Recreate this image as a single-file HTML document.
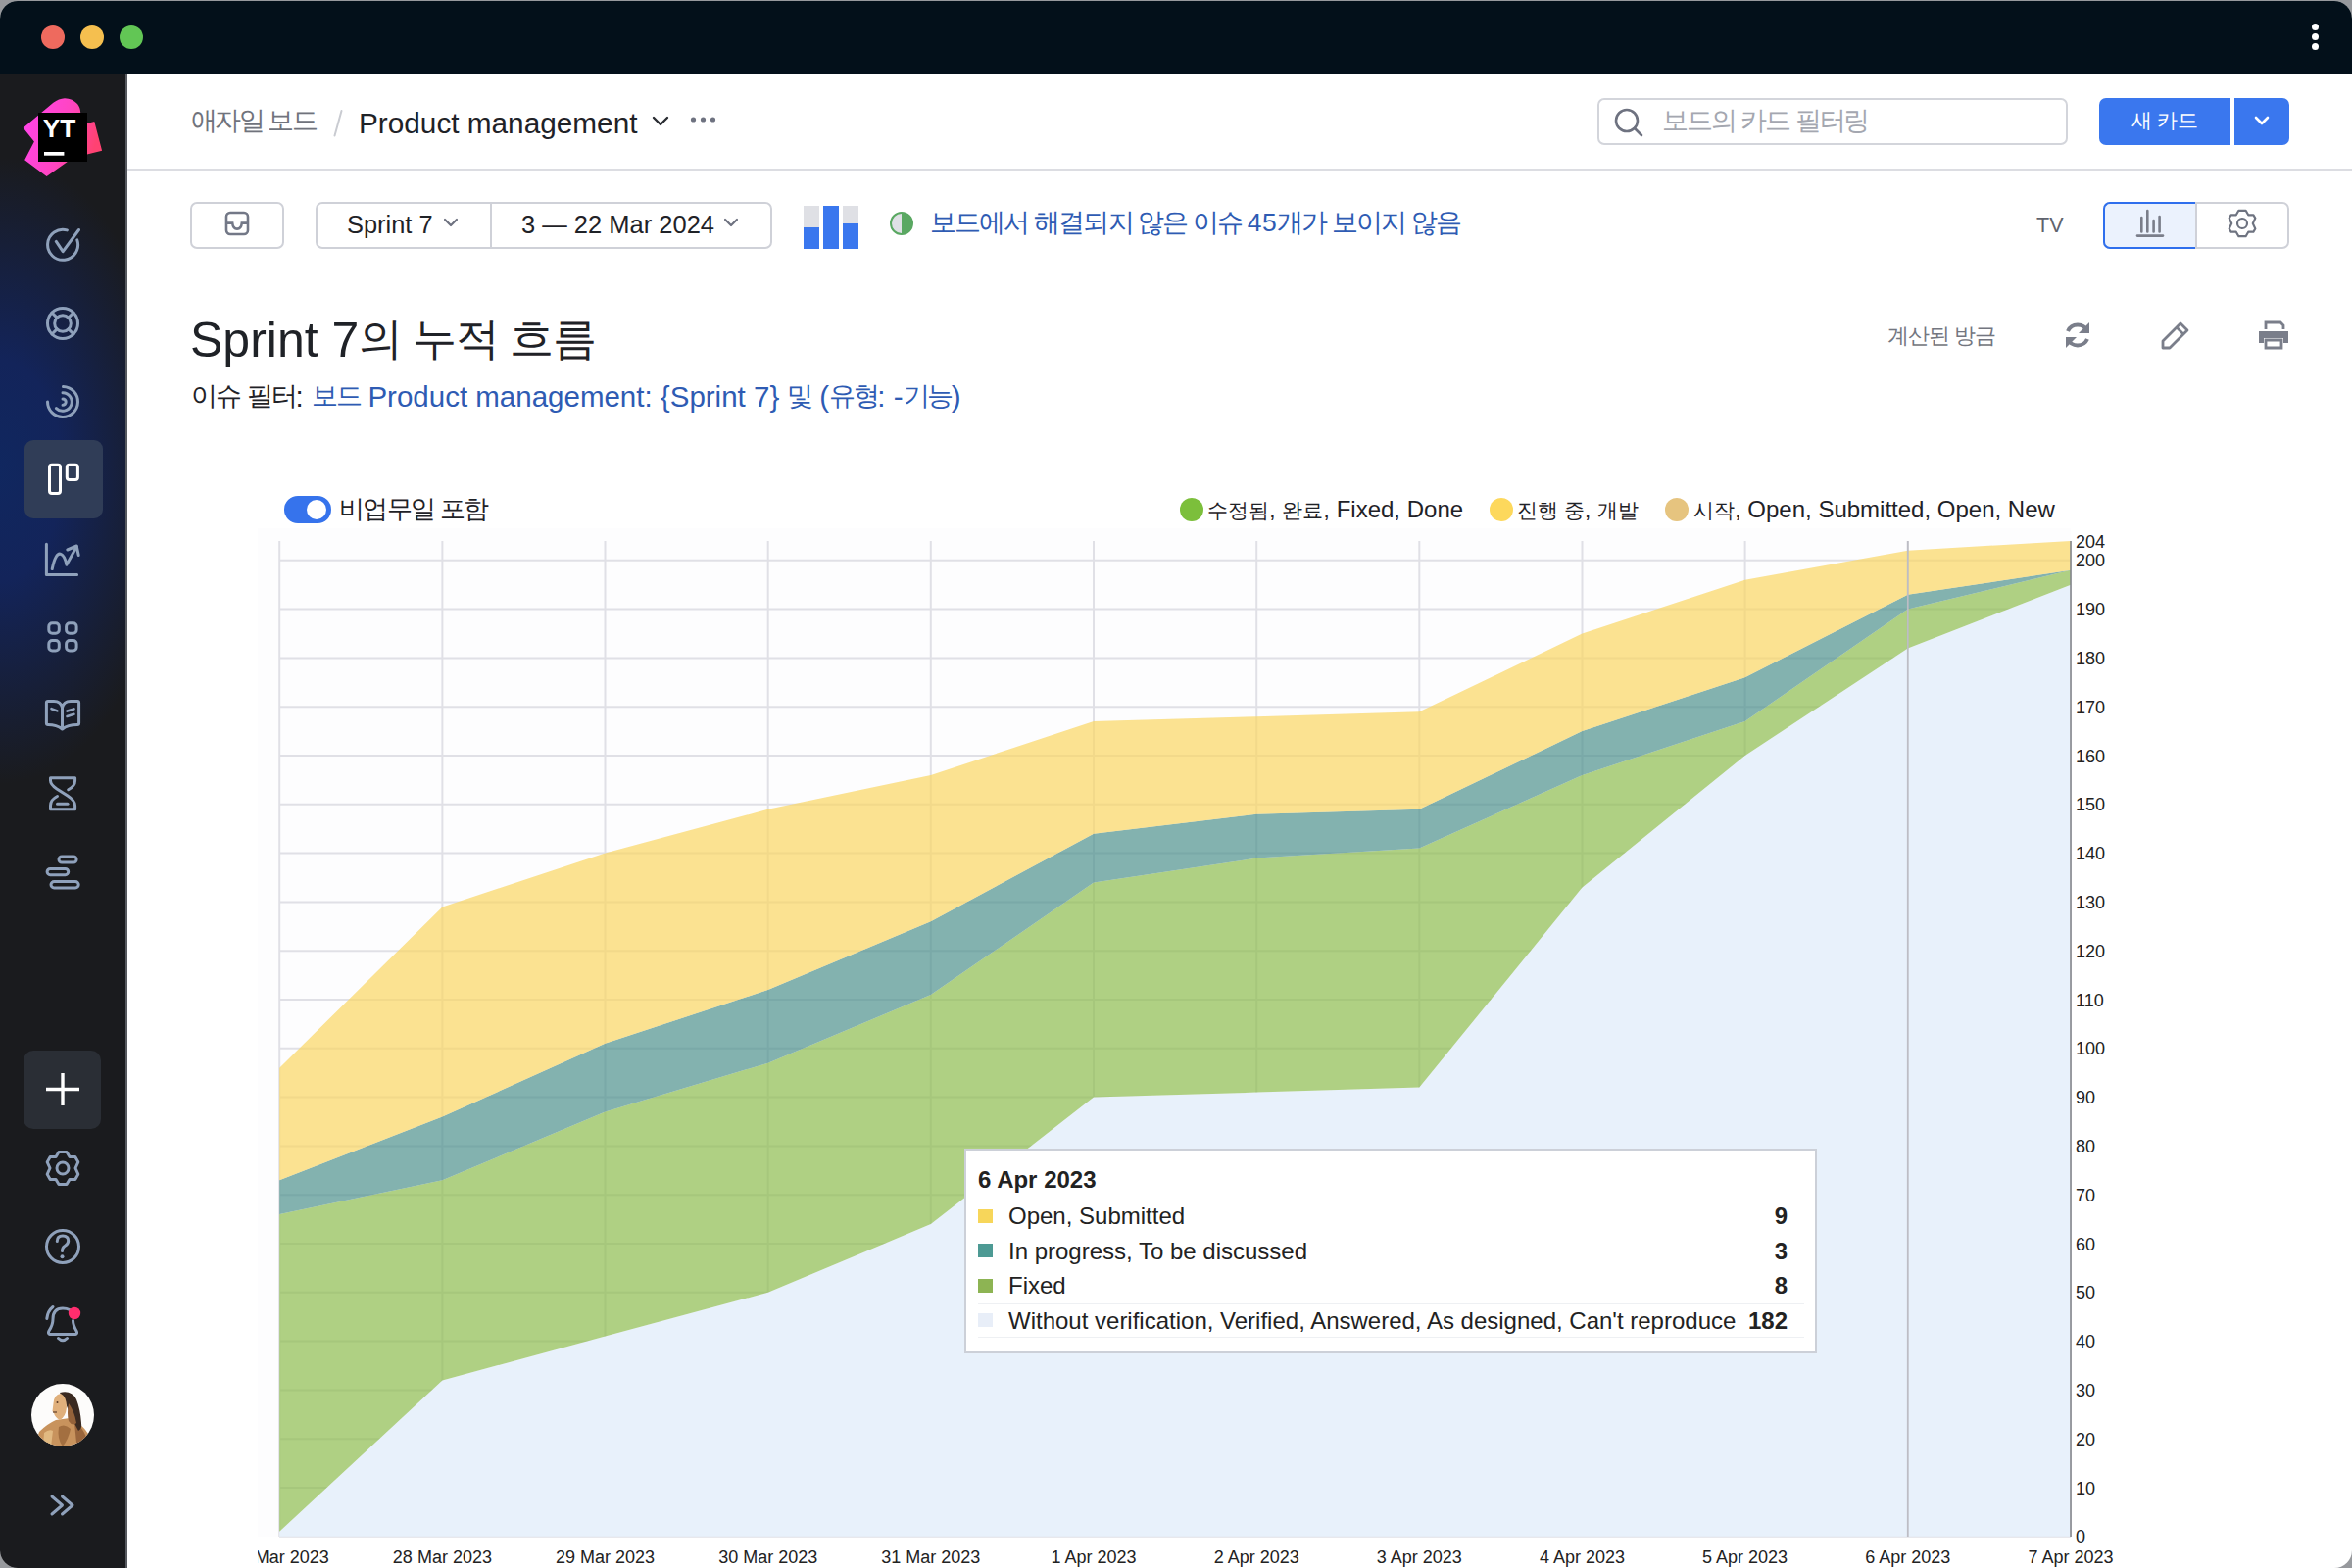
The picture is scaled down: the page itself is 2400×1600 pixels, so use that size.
<!DOCTYPE html>
<html><head><meta charset="utf-8">
<style>
*{box-sizing:border-box;margin:0;padding:0}
html,body{width:2400px;height:1600px;overflow:hidden;background:#97999d;font-family:"Liberation Sans",sans-serif}
.win{position:absolute;left:0;top:1px;width:2400px;height:1599px;border-radius:18px;overflow:hidden;background:#fff}
.titlebar{position:absolute;left:0;top:0;width:2400px;height:76px;background:#03101a}
.tl{position:absolute;top:26px;width:24px;height:24px;border-radius:50%}
.dots3 i{position:absolute;left:2359px;width:7px;height:7px;border-radius:50%;background:#fff}
.side{position:absolute;left:0;top:76px;width:128px;height:1524px;background:#1a1b1e;overflow:hidden}
.side .glow{position:absolute;left:-180px;top:84px;width:360px;height:640px;border-radius:50%;background:radial-gradient(closest-side,#10275f 0%,#13245a 35%,rgba(26,27,30,0) 100%)}
.sideborder{position:absolute;left:128px;top:76px;width:2px;height:1524px;background:#56595f}
.abs{position:absolute}
.ico{position:absolute;left:44px;width:40px;height:40px}
.t{position:absolute;white-space:nowrap;line-height:1}
.k{font-size:0.875em}
.sub .k{font-size:0.9em;letter-spacing:-2.4px;position:relative;top:-1.5px}
</style></head><body>
<div class="win">
<div class="pg" style="position:absolute;left:0;top:-1px;width:2400px;height:1600px"><div class="titlebar">
  <div class="tl" style="left:42px;background:#ee6a5e"></div>
  <div class="tl" style="left:82px;background:#f5bf4f"></div>
  <div class="tl" style="left:122px;background:#62c655"></div>
  <div class="dots3"><i style="top:24px"></i><i style="top:34px"></i><i style="top:44px"></i></div>
</div>
<div class="side"><div class="glow"></div></div>
<div class="sideborder"></div>
<div class="abs" style="left:25px;top:449px;width:80px;height:80px;border-radius:9px;background:#303d57"></div>
<div class="abs" style="left:24px;top:1072px;width:79px;height:80px;border-radius:10px;background:#2a2e35"></div>
<svg class="abs" style="left:0;top:0" width="128" height="1600" viewBox="0 0 128 1600">
<g fill="none" stroke="#fff" stroke-width="3" stroke-linejoin="round">
<rect x="50.5" y="474.3" width="11" height="29.1" rx="2.5"/>
<rect x="68.3" y="474.3" width="11.1" height="15.2" rx="2.5"/>
</g>
<defs><clipPath id="av"><circle cx="64" cy="1444" r="32"/></clipPath></defs>
<circle cx="64" cy="1444" r="32" fill="#fdfcfb"/>
<g clip-path="url(#av)">
<path d="M40 1461 Q48 1453 57 1449 L71 1447 Q82 1451 90 1463 L94 1480 H34 Z" fill="#c8935d"/>
<path d="M60 1456 Q66 1452 72 1458 Q70 1468 64 1476 Q58 1468 60 1456 Z" fill="#9a663a" opacity="0.8"/>
<path d="M45 1462 Q50 1458 54 1460 L52 1476 H44 Z" fill="#e3be85" opacity="0.9"/>
<path d="M76 1452 Q84 1456 88 1466 L86 1476 L78 1472 Z" fill="#8d5a34" opacity="0.8"/>
<path d="M61 1421 Q73 1418 78 1428 Q82 1438 83 1452 Q84 1458 80 1460 Q76 1452 72 1446 Q69 1436 66 1430 Z" fill="#3a2a21"/>
<path d="M70 1432 Q76 1440 78 1452 Q74 1456 70 1450 Q68 1442 70 1432 Z" fill="#94623a"/>
<path d="M54.5 1432 Q55 1423 62 1422 Q68 1425 68 1436 Q67 1446 61 1449 Q56 1446 55 1442 L53.5 1440 Z" fill="#e0b07c"/>
<circle cx="58.5" cy="1431" r="1" fill="#5a3a25"/>
<path d="M54 1441 H58" stroke="#4a2a1a" stroke-width="1.2"/>
</g>
</svg>
<svg class="abs" style="left:0;top:0" width="128" height="1600" viewBox="0 0 128 1600">
<defs><linearGradient id="pk" x1="0" y1="0" x2="1" y2="0.3"><stop offset="0" stop-color="#ff44f0"/><stop offset="0.6" stop-color="#ff45c0"/><stop offset="1" stop-color="#ff4272"/></linearGradient></defs>
<path d="M23.7 130.6 L54.4 104.8 Q60 100.5 66 100.2 Q74 100.5 79 106 Q82 109.5 82.2 115 L88.9 115 L88.9 126 L96.3 124 L104.1 153.8 L88.9 157.6 L88.9 164.7 L68.8 165 L47.6 180 L25.2 163.3 L34.9 144.4 Z" fill="url(#pk)"/>
<rect x="39" y="115" width="50" height="50" fill="#000"/>
<text x="43.8" y="140.2" font-family="Liberation Sans, sans-serif" font-size="26" font-weight="bold" fill="#fff" textLength="33.5" lengthAdjust="spacingAndGlyphs">YT</text>
<rect x="45" y="155" width="20.4" height="3.7" fill="#fff"/>
<g fill="none" stroke="#8fa1bb" stroke-width="3" stroke-linecap="round" stroke-linejoin="round">
<!-- check -->
<path d="M68.4 234.9 A15.5 15.5 0 1 0 78.8 244.9"/>
<path d="M57.3 246.4 L64.2 256.7 L80.5 234.5"/>
<!-- lifebuoy -->
<circle cx="64" cy="330" r="15.5"/>
<circle cx="64" cy="330" r="8.3"/>
<path d="M53 319 L58.1 324.1 M75 319 L69.9 324.1 M53 341 L58.1 335.9 M75 341 L69.9 335.9"/>
<!-- spiral -->
<path d="M64.5 394.5 A15.5 15.5 0 1 1 48.5 410"/>
<path d="M64 400.7 A9.3 9.3 0 1 1 57.4 416.6"/>
<path d="M64 406.9 A3.2 3.2 0 0 1 64 413.3"/>
<!-- chart -->
<path d="M47.4 555.2 V586.4 H78.6"/>
<path d="M53.2 580.6 Q57 563 62.1 565.4 Q66 567 67.9 576.2 L78.4 557.6"/>
<path d="M68.8 561 L78.2 557 L80.2 566.5"/>
<!-- grid -->
<rect x="49.8" y="635.7" width="10.5" height="10.5" rx="3.5"/>
<rect x="67.6" y="635.7" width="10.5" height="10.5" rx="3.5"/>
<rect x="49.8" y="653.5" width="10.5" height="10.5" rx="3.5"/>
<rect x="67.6" y="653.5" width="10.5" height="10.5" rx="3.5"/>
<!-- book -->
<path d="M63.5 744 Q58 739.5 49 739.5 Q47.4 739.5 47.4 738 V717 Q47.4 715.5 49 715.5 H55 Q62 715.5 63.5 722 Q65 715.5 72 715.5 H79 Q80.6 715.5 80.6 717 V738 Q80.6 739.5 79 739.5 Q69 739.5 63.5 744 V722"/>
<path d="M52.5 723.2 L58.5 725.4 M68.5 725.6 L75.5 723.4 M68.5 731 L75.5 728.8" stroke-width="2.6"/>
<!-- hourglass -->
<path d="M58.5 812.5 Q51.5 816 51.5 822 V825.8 H76.6 V822 Q76.6 817 69 812 L58 805 Q51.5 800.5 51.5 796.5 V793.8 H76.6 V796.5 Q76.6 802 69.7 805.8"/>
<path d="M58.5 820.3 H69" />
<!-- bars -->
<rect x="60" y="873.9" width="18.1" height="6.1" rx="3.05"/>
<rect x="48.1" y="886.5" width="21.6" height="6.2" rx="3.1"/>
<rect x="52" y="899.5" width="28.2" height="6.5" rx="3.25"/>
<!-- gear -->
<path d="M64 1175.5 L68 1175.5 L71 1180.6 L76.8 1180.6 L79.8 1185.8 L77 1192 L79.8 1198.2 L76.8 1203.4 L71 1203.4 L68 1208.5 L60 1208.5 L57 1203.4 L51.2 1203.4 L48.2 1198.2 L51 1192 L48.2 1185.8 L51.2 1180.6 L57 1180.6 L60 1175.5 Z"/>
<circle cx="64" cy="1192" r="6"/>
<!-- help -->
<circle cx="64" cy="1272" r="16.5"/>
<path d="M58.3 1266.5 Q58.3 1261 64 1261 Q69.7 1261 69.7 1266 Q69.7 1269.5 66 1271.5 Q63.5 1273 63.5 1276.5"/>
<!-- bell -->
<path d="M71 1336.5 Q68 1335 64 1335 Q54 1335 54 1346 Q54 1352 50 1358 Q48.5 1361 51 1361.5 H77 Q79.5 1361 78 1358 Q74.5 1352 74.5 1347.5"/>
<path d="M59.5 1365.5 Q64 1370 68.5 1365.5"/>
<path d="M54 1333.5 Q48.5 1338 47.8 1345.5"/>
</g>
<circle cx="63.5" cy="1282.2" r="2" fill="#8fa1bb"/>
<circle cx="76" cy="1340" r="6.2" fill="#ff2d6e"/>
<!-- plus -->
<path d="M64 1095 V1128 M47 1111.5 H81" stroke="#fff" stroke-width="3.4" stroke-linecap="butt"/>
<!-- chevrons -->
<path d="M53 1527 L63.5 1536 L53 1545 M63.5 1527 L74 1536 L63.5 1545" fill="none" stroke="#8fa1bb" stroke-width="3" stroke-linecap="round" stroke-linejoin="round"/>
</svg>


<!-- header -->
<div class="t" style="left:195px;top:109.7px;font-size:27px;letter-spacing:-2.6px;color:#70737c">애자일 보드</div>
<svg class="abs" style="left:338px;top:111px" width="14" height="30" viewBox="0 0 14 30"><path d="M10.5 2 L3.5 27.5" stroke="#c9cbd1" stroke-width="2" stroke-linecap="round"/></svg>
<div class="t" style="left:366px;top:111.2px;font-size:29.75px;color:#1f2227">Product management</div>
<svg class="abs" style="left:664px;top:116px" width="20" height="16" viewBox="0 0 20 16"><path d="M3 4 L10 11 L17 4" fill="none" stroke="#2a2d33" stroke-width="2.4" stroke-linecap="round" stroke-linejoin="round"/></svg>
<svg class="abs" style="left:704px;top:118px" width="28" height="8" viewBox="0 0 28 8"><circle cx="3.5" cy="4" r="2.6" fill="#6e7280"/><circle cx="13.5" cy="4" r="2.6" fill="#6e7280"/><circle cx="23.5" cy="4" r="2.6" fill="#6e7280"/></svg>

<div class="abs" style="left:1630px;top:100px;width:480px;height:48px;border:2px solid #d3d5db;border-radius:7px"></div>
<svg class="abs" style="left:1645px;top:108px" width="34" height="34" viewBox="0 0 34 34"><circle cx="15" cy="15" r="11" fill="none" stroke="#6e7280" stroke-width="2.6"/><path d="M23 23 L30 30" stroke="#6e7280" stroke-width="2.6" stroke-linecap="round"/></svg>
<div class="t" style="left:1696px;top:110px;font-size:27px;letter-spacing:-2.06px;color:#a4a7b0">보드의 카드 필터링</div>

<div class="abs" style="left:2142px;top:100px;width:134px;height:48px;background:#3a77ee;border-radius:7px 0 0 7px"></div>
<div class="t" style="left:2142px;top:112px;width:134px;text-align:center;font-size:21px;color:#fff">새 카드</div>
<div class="abs" style="left:2280px;top:100px;width:56px;height:48px;background:#3a77ee;border-radius:0 7px 7px 0"></div>
<svg class="abs" style="left:2298px;top:115px" width="20" height="16" viewBox="0 0 20 16"><path d="M4 5 L10 11 L16 5" fill="none" stroke="#fff" stroke-width="2.6" stroke-linecap="round" stroke-linejoin="round"/></svg>

<div class="abs" style="left:130px;top:172px;width:2270px;height:2px;background:#dcdde2"></div>

<!-- toolbar -->
<div class="abs" style="left:194px;top:206px;width:96px;height:48px;border:2px solid #cfd1d8;border-radius:7px"></div>
<svg class="abs" style="left:229px;top:215px" width="26" height="26" viewBox="0 0 26 26"><rect x="2" y="2" width="22" height="22" rx="4" fill="none" stroke="#737887" stroke-width="2.6"/><path d="M2 12.6 H8.2 Q8.8 18.6 13 18.6 Q17.2 18.6 17.8 12.6 H24" fill="none" stroke="#737887" stroke-width="2.6"/></svg>

<div class="abs" style="left:322px;top:206px;width:466px;height:48px;border:2px solid #cfd1d8;border-radius:7px"></div>
<div class="abs" style="left:500px;top:206px;width:2px;height:48px;background:#cfd1d8"></div>
<div class="t" style="left:354px;top:216.5px;font-size:25.4px;color:#1f2227">Sprint 7</div>
<svg class="abs" style="left:451px;top:220px" width="18" height="14" viewBox="0 0 18 14"><path d="M3 4 L9 10 L15 4" fill="none" stroke="#6e7280" stroke-width="2.2" stroke-linecap="round" stroke-linejoin="round"/></svg>
<div class="t" style="left:532px;top:216.5px;font-size:25.5px;color:#1f2227">3 — 22 Mar 2024</div>
<svg class="abs" style="left:737px;top:220px" width="18" height="14" viewBox="0 0 18 14"><path d="M3 4 L9 10 L15 4" fill="none" stroke="#6e7280" stroke-width="2.2" stroke-linecap="round" stroke-linejoin="round"/></svg>

<svg class="abs" style="left:820px;top:210px" width="56" height="44" viewBox="0 0 56 44">
<rect x="0" y="0" width="16" height="44" fill="#dfe0e5"/><rect x="0" y="22" width="16" height="22" fill="#3a77ee"/>
<rect x="20" y="0" width="16" height="44" fill="#3a77ee"/>
<rect x="40" y="0" width="16" height="44" fill="#dfe0e5"/><rect x="40" y="18" width="16" height="26" fill="#3a77ee"/>
</svg>
<svg class="abs" style="left:907px;top:215px" width="26" height="26" viewBox="0 0 26 26"><circle cx="13" cy="13" r="11" fill="#dfe0e5" stroke="#5aa862" stroke-width="2"/><path d="M13 2 A11 11 0 0 1 13 24 Z" fill="#5aa862"/></svg>
<div class="t" style="left:949px;top:213.5px;font-size:26.5px;letter-spacing:-1.85px;color:#2e5bb3">보드에서 해결되지 않은 이슈 <span style="letter-spacing:0.5px">45</span>개가 보이지 않음</div>

<div class="t" style="left:2078px;top:220px;font-size:21.5px;color:#5f636d">TV</div>
<div class="abs" style="left:2146px;top:206px;width:190px;height:48px;border:2px solid #cfd1d8;border-radius:7px"></div>
<div class="abs" style="left:2146px;top:206px;width:95px;height:48px;border:2px solid #2f6fed;border-right:none;border-radius:7px 0 0 7px;background:#ebf2fd"></div><div class="abs" style="left:2240px;top:206px;width:2px;height:48px;background:#cfd1d8"></div>
<svg class="abs" style="left:2176px;top:210px" width="36" height="36" viewBox="0 0 36 36"><path d="M9.3 26.5 V12 M15.3 26.5 V5 M21.6 26.5 V15 M27.6 26.5 V11" fill="none" stroke="#7a7e8a" stroke-width="2.6" stroke-linecap="round"/><path d="M5 30.6 H31" stroke="#7a7e8a" stroke-width="2.6" stroke-linecap="round"/></svg>
<svg class="abs" style="left:2272px;top:212px" width="32" height="32" viewBox="0 0 32 32"><path d="M16 2.8 L19.6 2.8 L22.2 7.3 L27.4 7.3 L29.3 10.6 L26.8 16 L29.3 21.4 L27.4 24.7 L22.2 24.7 L19.6 29.2 L12.4 29.2 L9.8 24.7 L4.6 24.7 L2.7 21.4 L5.2 16 L2.7 10.6 L4.6 7.3 L9.8 7.3 L12.4 2.8 Z" fill="none" stroke="#6e7380" stroke-width="2.2" stroke-linejoin="round"/><circle cx="16" cy="16" r="5" fill="none" stroke="#6e7380" stroke-width="2.2"/></svg>

<!-- title -->
<div class="t" style="left:194px;top:321.5px;font-size:50px;color:#1f2227">Sprint 7<span style="font-size:45px;letter-spacing:-1.2px;position:relative;top:-3px">의 누적 흐름</span></div>
<div class="t sub" style="left:195px;top:389.5px;font-size:29.5px;color:#1f2227"><span class="k">이슈</span> <span class="k">필터</span>: <span style="color:#2e5bb3"><span class="k">보드</span> Product management: {Sprint 7} <span class="k">및</span> (<span class="k">유형</span>: -<span class="k">기능</span>)</span></div>

<div class="t" style="left:1926px;top:332.3px;font-size:22px;letter-spacing:-1.12px;color:#737680">계산된 방금</div>
<svg class="abs" style="left:2104px;top:326px" width="32" height="32" viewBox="0 0 32 32"><path d="M26 12 A11 11 0 0 0 6 12" fill="none" stroke="#7a7e8a" stroke-width="4"/><path d="M28 3 V14 H17 Z" fill="#7a7e8a"/><path d="M6 20 A11 11 0 0 0 26 20" fill="none" stroke="#7a7e8a" stroke-width="4"/><path d="M4 29 V18 H15 Z" fill="#7a7e8a"/></svg>
<svg class="abs" style="left:2204px;top:326px" width="32" height="32" viewBox="0 0 32 32"><path d="M21 4 L28 11 L10 29 H3 V22 Z M17 8 L24 15" fill="none" stroke="#7a7e8a" stroke-width="2.8" stroke-linejoin="round"/></svg>
<svg class="abs" style="left:2303px;top:326px" width="34" height="32" viewBox="0 0 34 32"><path d="M9 10 V3 H24 L27 6 V10" fill="none" stroke="#7a7e8a" stroke-width="2.8"/><path d="M2 12 H32 V24 H27 V19 H7 V24 H2 Z" fill="#7a7e8a"/><path d="M9 21 H25 V29 H9 Z" fill="none" stroke="#7a7e8a" stroke-width="2.8"/></svg>

<!-- legend -->
<div class="abs" style="left:290px;top:506px;width:48px;height:28px;border-radius:14px;background:#3673ec"></div>
<div class="abs" style="left:313px;top:510px;width:20px;height:20px;border-radius:50%;background:#fff"></div>
<div class="t" style="left:346px;top:507px;font-size:25.5px;letter-spacing:-1.6px;color:#1f2227">비업무일 포함</div>

<div class="abs" style="left:1204px;top:508px;width:24px;height:24px;border-radius:50%;background:#7cbf3b"></div>
<div class="t" style="left:1232px;top:507.6px;font-size:24px;color:#1f2227"><span class="k">수정됨</span>, <span class="k">완료</span>, Fixed, Done</div>
<div class="abs" style="left:1520px;top:508px;width:24px;height:24px;border-radius:50%;background:#fdd85c"></div>
<div class="t" style="left:1548px;top:507.6px;font-size:24px;color:#1f2227"><span class="k">진행 중</span>, <span class="k">개발</span></div>
<div class="abs" style="left:1699px;top:508px;width:24px;height:24px;border-radius:50%;background:#e6c47f"></div>
<div class="t" style="left:1728px;top:507.6px;font-size:24px;color:#1f2227"><span class="k">시작</span>, Open, Submitted, Open, New</div>
<svg class="abs" style="left:0;top:0" width="2400" height="1600" viewBox="0 0 2400 1600">
<defs><clipPath id="lc"><rect x="263" y="1570" width="2000" height="30"/></clipPath></defs>
<rect x="263" y="539" width="1850" height="1029" fill="#fdfdfe"/>
<g stroke="#e0e0e6" stroke-width="2">
<line x1="285" y1="1567.8" x2="2113" y2="1567.8"/>
<line x1="285" y1="1518.0" x2="2113" y2="1518.0"/>
<line x1="285" y1="1468.2" x2="2113" y2="1468.2"/>
<line x1="285" y1="1418.4" x2="2113" y2="1418.4"/>
<line x1="285" y1="1368.6" x2="2113" y2="1368.6"/>
<line x1="285" y1="1318.8" x2="2113" y2="1318.8"/>
<line x1="285" y1="1269.0" x2="2113" y2="1269.0"/>
<line x1="285" y1="1219.2" x2="2113" y2="1219.2"/>
<line x1="285" y1="1169.4" x2="2113" y2="1169.4"/>
<line x1="285" y1="1119.6" x2="2113" y2="1119.6"/>
<line x1="285" y1="1069.8" x2="2113" y2="1069.8"/>
<line x1="285" y1="1020.0" x2="2113" y2="1020.0"/>
<line x1="285" y1="970.2" x2="2113" y2="970.2"/>
<line x1="285" y1="920.4" x2="2113" y2="920.4"/>
<line x1="285" y1="870.6" x2="2113" y2="870.6"/>
<line x1="285" y1="820.8" x2="2113" y2="820.8"/>
<line x1="285" y1="771.0" x2="2113" y2="771.0"/>
<line x1="285" y1="721.2" x2="2113" y2="721.2"/>
<line x1="285" y1="671.4" x2="2113" y2="671.4"/>
<line x1="285" y1="621.6" x2="2113" y2="621.6"/>
<line x1="285" y1="571.8" x2="2113" y2="571.8"/>
<line x1="285.2" y1="552" x2="285.2" y2="1568"/>
<line x1="451.4" y1="552" x2="451.4" y2="1568"/>
<line x1="617.5" y1="552" x2="617.5" y2="1568"/>
<line x1="783.7" y1="552" x2="783.7" y2="1568"/>
<line x1="949.8" y1="552" x2="949.8" y2="1568"/>
<line x1="1116.0" y1="552" x2="1116.0" y2="1568"/>
<line x1="1282.2" y1="552" x2="1282.2" y2="1568"/>
<line x1="1448.3" y1="552" x2="1448.3" y2="1568"/>
<line x1="1614.5" y1="552" x2="1614.5" y2="1568"/>
<line x1="1780.6" y1="552" x2="1780.6" y2="1568"/>
<line x1="1946.8" y1="552" x2="1946.8" y2="1568"/>
<line x1="2113.0" y1="552" x2="2113.0" y2="1568"/>
</g>
<polygon points="285.2,1562.8 451.4,1408.4 617.5,1363.6 783.7,1318.8 949.8,1249.1 1116.0,1119.6 1282.2,1114.6 1448.3,1109.6 1614.5,905.5 1780.6,771.0 1946.8,661.4 2113.0,596.7 2113.0,1567.8 1946.8,1567.8 1780.6,1567.8 1614.5,1567.8 1448.3,1567.8 1282.2,1567.8 1116.0,1567.8 949.8,1567.8 783.7,1567.8 617.5,1567.8 451.4,1567.8 285.2,1567.8" fill="#e8f1fb"/>
<polygon points="285.2,1239.1 451.4,1204.3 617.5,1134.5 783.7,1084.7 949.8,1015.0 1116.0,900.5 1282.2,875.6 1448.3,865.6 1614.5,790.9 1780.6,736.1 1946.8,621.6 2113.0,581.8 2113.0,596.7 1946.8,661.4 1780.6,771.0 1614.5,905.5 1448.3,1109.6 1282.2,1114.6 1116.0,1119.6 949.8,1249.1 783.7,1318.8 617.5,1363.6 451.4,1408.4 285.2,1562.8" fill="#8dbc4f" fill-opacity="0.7"/>
<polygon points="285.2,1204.3 451.4,1139.5 617.5,1064.8 783.7,1010.0 949.8,940.3 1116.0,850.7 1282.2,830.8 1448.3,825.8 1614.5,746.1 1780.6,691.3 1946.8,606.7 2113.0,581.8 2113.0,581.8 1946.8,621.6 1780.6,736.1 1614.5,790.9 1448.3,865.6 1282.2,875.6 1116.0,900.5 949.8,1015.0 783.7,1084.7 617.5,1134.5 451.4,1204.3 285.2,1239.1" fill="#4e928d" fill-opacity="0.7"/>
<polygon points="285.2,1089.7 451.4,925.4 617.5,870.6 783.7,825.8 949.8,790.9 1116.0,736.1 1282.2,731.2 1448.3,726.2 1614.5,646.5 1780.6,591.7 1946.8,561.8 2113.0,551.9 2113.0,581.8 1946.8,606.7 1780.6,691.3 1614.5,746.1 1448.3,825.8 1282.2,830.8 1116.0,850.7 949.8,940.3 783.7,1010.0 617.5,1064.8 451.4,1139.5 285.2,1204.3" fill="#fad562" fill-opacity="0.7"/>
<line x1="1946.8" y1="552" x2="1946.8" y2="1568" stroke="#bdbdc5" stroke-width="1.8"/>
<line x1="2113" y1="552" x2="2113" y2="1568" stroke="#85878d" stroke-width="1.6"/>
<g font-family="Liberation Sans, sans-serif" font-size="18" fill="#222">
<g clip-path="url(#lc)"><text x="285.2" y="1595" text-anchor="middle">27 Mar 2023</text>
<text x="451.4" y="1595" text-anchor="middle">28 Mar 2023</text>
<text x="617.5" y="1595" text-anchor="middle">29 Mar 2023</text>
<text x="783.7" y="1595" text-anchor="middle">30 Mar 2023</text>
<text x="949.8" y="1595" text-anchor="middle">31 Mar 2023</text>
<text x="1116.0" y="1595" text-anchor="middle">1 Apr 2023</text>
<text x="1282.2" y="1595" text-anchor="middle">2 Apr 2023</text>
<text x="1448.3" y="1595" text-anchor="middle">3 Apr 2023</text>
<text x="1614.5" y="1595" text-anchor="middle">4 Apr 2023</text>
<text x="1780.6" y="1595" text-anchor="middle">5 Apr 2023</text>
<text x="1946.8" y="1595" text-anchor="middle">6 Apr 2023</text>
<text x="2113.0" y="1595" text-anchor="middle">7 Apr 2023</text>
</g>
<text x="2118" y="1574.3">0</text>
<text x="2118" y="1524.5">10</text>
<text x="2118" y="1474.7">20</text>
<text x="2118" y="1424.9">30</text>
<text x="2118" y="1375.1">40</text>
<text x="2118" y="1325.3">50</text>
<text x="2118" y="1275.5">60</text>
<text x="2118" y="1225.7">70</text>
<text x="2118" y="1175.9">80</text>
<text x="2118" y="1126.1">90</text>
<text x="2118" y="1076.3">100</text>
<text x="2118" y="1026.5">110</text>
<text x="2118" y="976.7">120</text>
<text x="2118" y="926.9">130</text>
<text x="2118" y="877.1">140</text>
<text x="2118" y="827.3">150</text>
<text x="2118" y="777.5">160</text>
<text x="2118" y="727.7">170</text>
<text x="2118" y="677.9">180</text>
<text x="2118" y="628.1">190</text>
<text x="2118" y="578.3">200</text>
<text x="2118" y="558.5">204</text>
</g>
</svg><div class="abs" style="left:984px;top:1172px;width:870px;height:209px;background:#fff;border:2px solid #ccd0d8"></div>
<div class="t" style="left:998px;top:1192px;font-size:24px;font-weight:bold;color:#222">6 Apr 2023</div>
<div class="abs" style="left:998px;top:1234px;width:15px;height:14px;background:#f7d65a"></div>
<div class="t" style="left:1029px;top:1229px;font-size:24px;color:#222">Open, Submitted</div>
<div class="t" style="left:1700px;top:1229px;width:124px;text-align:right;font-size:24px;font-weight:bold;color:#222">9</div>
<div class="abs" style="left:998px;top:1269px;width:15px;height:14px;background:#4d9a94"></div>
<div class="t" style="left:1029px;top:1265px;font-size:24px;color:#222">In progress, To be discussed</div>
<div class="t" style="left:1700px;top:1265px;width:124px;text-align:right;font-size:24px;font-weight:bold;color:#222">3</div>
<div class="abs" style="left:998px;top:1305px;width:15px;height:14px;background:#8db453"></div>
<div class="t" style="left:1029px;top:1300px;font-size:24px;color:#222">Fixed</div>
<div class="t" style="left:1700px;top:1300px;width:124px;text-align:right;font-size:24px;font-weight:bold;color:#222">8</div>
<div class="abs" style="left:998px;top:1330px;width:843px;height:1px;background:#eef0f3"></div>
<div class="abs" style="left:998px;top:1340px;width:15px;height:14px;background:#e8eef8"></div>
<div class="t" style="left:1029px;top:1336px;font-size:24px;color:#222">Without verification, Verified, Answered, As designed, Can't reproduce</div>
<div class="t" style="left:1700px;top:1336px;width:124px;text-align:right;font-size:24px;font-weight:bold;color:#222">182</div>
<div class="abs" style="left:998px;top:1364px;width:843px;height:1px;background:#eef0f3"></div>
</div></div></body></html>
